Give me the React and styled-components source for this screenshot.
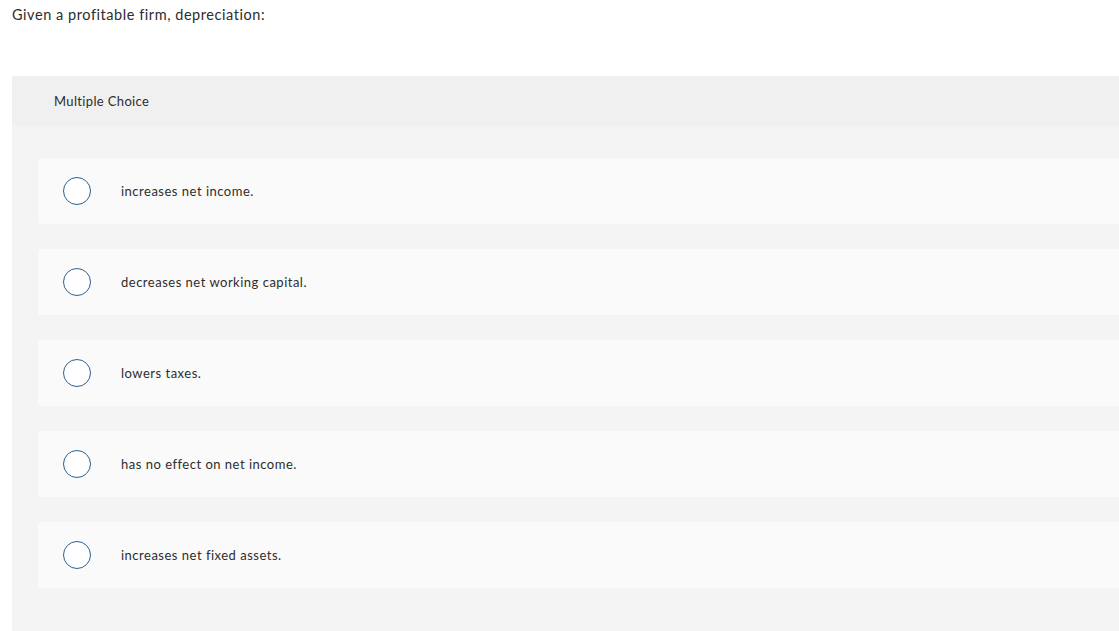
import React from "react";
import styled, { createGlobalStyle } from "styled-components";

const Global = createGlobalStyle`
  html, body { margin: 0; padding: 0; background: #fff; }
  body {
    font-family: Lato, "Open Sans", sans-serif;
    color: #333;
    overflow: hidden;
    font-variant-ligatures: none;
  }
`;

const Page = styled.div`
  width: 1119px;
  height: 631px;
  overflow: hidden;
  padding: 5px 0 0 12px;
  box-sizing: border-box;
`;

const Prompt = styled.p`
  margin: 0;
  font-size: 14.5px;
  line-height: 20px;
  letter-spacing: 0.55px;
  color: #2d2d2d;
`;

const Panel = styled.section`
  margin-top: 51px;
  width: 1140px;
  background: #f4f4f4;
  padding-bottom: 60px;
`;

const PanelHeader = styled.div`
  height: 50px;
  background: #f0f0f0;
  display: flex;
  align-items: center;
  padding-left: 42px;
  font-size: 13px;
  letter-spacing: 0.35px;
  color: #2d2d2d;
`;

const Options = styled.div`
  display: flex;
  flex-direction: column;
  gap: 25px;
  padding: 32px 0 0 26px;
`;

const Option = styled.label`
  height: 66px;
  background: #fafafa;
  border-radius: 3px;
  display: flex;
  align-items: center;
  padding-left: 25px;
  cursor: pointer;
`;

const Radio = styled.span`
  width: 26px;
  height: 26px;
  border: 1.5px solid #2f5f8f;
  border-radius: 50%;
  background: #fff;
  flex-shrink: 0;
`;

const OptionText = styled.span`
  margin-left: 30px;
  font-size: 13px;
  letter-spacing: 0.5px;
  color: #2d2d2d;
`;

const choices = [
  "increases net income.",
  "decreases net working capital.",
  "lowers taxes.",
  "has no effect on net income.",
  "increases net fixed assets.",
];

export default function App() {
  return (
    <>
      <Global />
      <Page>
        <Prompt>Given a profitable firm, depreciation:</Prompt>
        <Panel>
          <PanelHeader>Multiple Choice</PanelHeader>
          <Options>
            {choices.map((c) => (
              <Option key={c}>
                <Radio />
                <OptionText>{c}</OptionText>
              </Option>
            ))}
          </Options>
        </Panel>
      </Page>
    </>
  );
}
